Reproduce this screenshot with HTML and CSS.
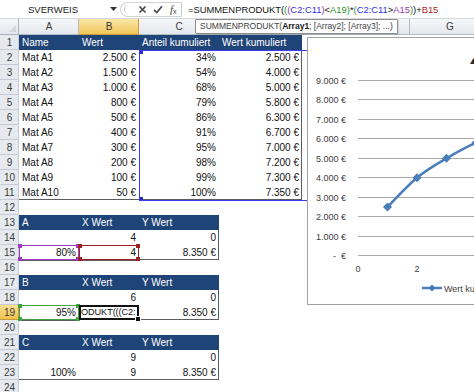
FILE: index.html
```html
<!DOCTYPE html>
<html lang="de">
<head>
<meta charset="utf-8">
<title>SUMMENPRODUKT</title>
<link rel="stylesheet" href="styles.css">
</head>
<body>
<div class="app">
  <div class="fbar">
    <div class="namebox">SVERWEIS</div>
    <div class="nbarrow"><svg width="7" height="4" viewBox="0 0 7 4"><path d="M0 0H7L3.5 4Z" fill="#333"/></svg></div>
    <div class="fxbtns">
      <span class="grip"></span>
      <svg class="ico" width="9" height="9" viewBox="0 0 9 9"><path d="M1.5 1.5L7.5 7.5M7.5 1.5L1.5 7.5" stroke="#4a4a4a" stroke-width="1.7"/></svg>
      <svg class="ico" width="10" height="9" viewBox="0 0 10 9"><path d="M1 4.8L3.8 7.6L9 1.2" stroke="#4a4a4a" stroke-width="1.7" fill="none"/></svg>
      <span class="fx"><i>f</i><span class="fxx">x</span></span>
    </div>
    <div class="formula">=SUMMENPRODUKT(<span class="pg">(</span><span class="pp">(</span><span class="rb">C2:C11</span><span class="pp">)</span>&lt;<span class="rg">A19</span><span class="pg">)</span>*<span class="pg">(</span><span class="rb">C2:C11</span>&gt;<span class="rp">A15</span><span class="pg">)</span>)+<span class="rr">B15</span></div>
  </div>

  <div class="sheet">
    <div class="corner"></div><div class="ch">A</div><div class="ch sel">B</div><div class="ch">C</div><div class="ch"></div><div class="ch"></div><div class="ch"></div><div class="ch">G</div>

    <div class="rn">1</div><div class="c hd">Name</div><div class="c hd">Wert</div><div class="c hd">Anteil kumuliert</div><div class="c hd">Wert kumuliert</div>
    <div class="rn">2</div><div class="c">Mat A1</div><div class="c r">2.500 €</div><div class="c r">34%</div><div class="c r tr">2.500 €</div>
    <div class="rn">3</div><div class="c">Mat A2</div><div class="c r">1.500 €</div><div class="c r">54%</div><div class="c r tr">4.000 €</div>
    <div class="rn">4</div><div class="c">Mat A3</div><div class="c r">1.000 €</div><div class="c r">68%</div><div class="c r tr">5.000 €</div>
    <div class="rn">5</div><div class="c">Mat A4</div><div class="c r">800 €</div><div class="c r">79%</div><div class="c r tr">5.800 €</div>
    <div class="rn">6</div><div class="c">Mat A5</div><div class="c r">500 €</div><div class="c r">86%</div><div class="c r tr">6.300 €</div>
    <div class="rn">7</div><div class="c">Mat A6</div><div class="c r">400 €</div><div class="c r">91%</div><div class="c r tr">6.700 €</div>
    <div class="rn">8</div><div class="c">Mat A7</div><div class="c r">300 €</div><div class="c r">95%</div><div class="c r tr">7.000 €</div>
    <div class="rn">9</div><div class="c">Mat A8</div><div class="c r">200 €</div><div class="c r">98%</div><div class="c r tr">7.200 €</div>
    <div class="rn">10</div><div class="c">Mat A9</div><div class="c r">100 €</div><div class="c r">99%</div><div class="c r tr">7.300 €</div>
    <div class="rn">11</div><div class="c tb">Mat A10</div><div class="c r tb">50 €</div><div class="c r tb">100%</div><div class="c r trb">7.350 €</div>
    <div class="rn">12</div>

    <div class="rn">13</div><div class="c hd">A</div><div class="c hd">X Wert</div><div class="c hd">Y Wert</div>
    <div class="rn">14</div><div class="c"></div><div class="c r">4</div><div class="c r tr">0</div>
    <div class="rn">15</div><div class="c r rf purple">80%</div><div class="c r rf red">4</div><div class="c r trb">8.350 €</div>
    <div class="rn">16</div>

    <div class="rn">17</div><div class="c hd">B</div><div class="c hd">X Wert</div><div class="c hd">Y Wert</div>
    <div class="rn">18</div><div class="c"></div><div class="c r">6</div><div class="c r tr">0</div>
    <div class="rn on">19</div><div class="c r rf green">95%</div><div class="c act"><span>ODUKT(((C2:</span></div><div class="c r trb">8.350 €</div>
    <div class="rn">20</div>

    <div class="rn">21</div><div class="c hd">C</div><div class="c hd">X Wert</div><div class="c hd">Y Wert</div>
    <div class="rn">22</div><div class="c"></div><div class="c r">9</div><div class="c r tr">0</div>
    <div class="rn">23</div><div class="c r tb">100%</div><div class="c r tb">9</div><div class="c r trb">8.350 €</div>
    <div class="rn">24</div>

    <div class="range"></div>
  </div>

  <div class="tip">SUMMENPRODUKT(<b>Array1</b>; [Array2]; [Array3]; ...)</div>

  <div class="chart">
    <svg width="180" height="267" viewBox="1 1 180 267">
      <g stroke="#a9a9a9" stroke-width="1">
        <line x1="51" y1="218.5" x2="200" y2="218.5"/>
        <line x1="51" y1="199.5" x2="200" y2="199.5"/>
        <line x1="51" y1="179.5" x2="200" y2="179.5"/>
        <line x1="51" y1="160.5" x2="200" y2="160.5"/>
        <line x1="51" y1="140.5" x2="200" y2="140.5"/>
        <line x1="51" y1="121.5" x2="200" y2="121.5"/>
        <line x1="51" y1="101.5" x2="200" y2="101.5"/>
        <line x1="51" y1="82.5" x2="200" y2="82.5"/>
        <line x1="51" y1="62.5" x2="200" y2="62.5"/>
        <line x1="51" y1="43.5" x2="200" y2="43.5"/>
      </g>
      <g class="lbl" text-anchor="end">
        <text x="39" y="46.5">9.000 €</text>
        <text x="39" y="66">8.000 €</text>
        <text x="39" y="85.5">7.000 €</text>
        <text x="39" y="105">6.000 €</text>
        <text x="39" y="124.5">5.000 €</text>
        <text x="39" y="144">4.000 €</text>
        <text x="39" y="163.5">3.000 €</text>
        <text x="39" y="183">2.000 €</text>
        <text x="39" y="202.5">1.000 €</text>
        <text x="39" y="222">€</text>
        <text x="29" y="222">-</text>
      </g>
      <g class="lbl" text-anchor="middle">
        <text x="51" y="235">0</text>
        <text x="110" y="235">2</text>
      </g>
      <path d="M80.5,169.9 C85.4,165 100.2,148.8 110,140.7 C119.8,132.6 129.7,127.1 139.5,121.3 C149.3,115.5 159.2,109.9 169,105.7 C178.8,101.5 188.7,98.7 198.5,96" fill="none" stroke="#4a7ebb" stroke-width="2.5"/>
      <g fill="#4a7ebb">
        <polygon points="80.5,165.4 85,169.9 80.5,174.4 76,169.9"/>
        <polygon points="110,136.2 114.5,140.7 110,145.2 105.5,140.7"/>
        <polygon points="139.5,116.8 144,121.3 139.5,125.8 135,121.3"/>
        <polygon points="169,101.2 173.5,105.7 169,110.2 164.5,105.7"/>
      </g>
      <line x1="115" y1="251" x2="135" y2="251" stroke="#4a7ebb" stroke-width="2.5"/>
      <polygon points="125,247.5 128.5,251 125,254.5 121.5,251" fill="#4a7ebb"/>
      <text class="lbl" x="137" y="254.5">Wert kumuliert</text>
      <polygon points="163,27 166.5,21 170,27" fill="#3a2a1c"/>
    </svg>
  </div>
</div>
</body>
</html>
```

FILE: styles.css
```css
html, body {
  margin: 0;
  padding: 0;
  background: #fff;
}
body {
  width: 474px;
  height: 392px;
  overflow: hidden;
  font-family: "Liberation Sans", Arial, sans-serif;
  color: #111;
}
.app {
  position: relative;
  width: 474px;
  height: 392px;
  overflow: hidden;
}

/* formula bar */
.fbar {
  display: flex;
  align-items: center;
  height: 18px;
  border-bottom: 1px solid #d3d8de;
  background: #fff;
  white-space: nowrap;
}
.namebox {
  width: 106px;
  text-align: center;
  font-size: 9.5px;
  color: #222;
}
.nbarrow {
  width: 14px;
  display: flex;
  justify-content: center;
  align-items: center;
}
.fxbtns {
  width: 62px;
  height: 15px;
  box-sizing: border-box;
  display: flex;
  align-items: center;
  border: 1px solid #cfd4da;
  border-right: 1px solid #c6cbd1;
  border-radius: 8px 0 0 8px;
}
.grip {
  width: 6px;
  height: 9px;
  margin: 0 7px 0 3px;
  border-left: 1px solid #c3c8ce;
  border-radius: 5px 0 0 5px;
}
.ico {
  display: block;
  margin-right: 6px;
}
.fx {
  font-family: "Liberation Serif", serif;
  font-size: 11px;
  color: #444;
  margin-left: 1px;
}
.fxx {
  font-family: "Liberation Sans", sans-serif;
  font-size: 7px;
  position: relative;
  top: 1px;
}
.formula {
  padding-left: 6px;
  font-size: 9.4px;
  color: #111;
}
.rb { color: #3030e8; }
.rg { color: #2a962a; }
.rp { color: #9434b4; }
.rr { color: #b02020; }
.pg { color: #2a962a; }
.pp { color: #9434b4; }

/* sheet grid */
.sheet {
  position: relative;
  display: grid;
  grid-template-columns: 19px 60px 60px 80px 83px 50px 58px 80px;
  grid-template-rows: 16px;
  grid-auto-rows: 15px;
  font-size: 10px;
}
.corner {
  background: linear-gradient(#f4f6f8, #e2e6eb);
  box-shadow: inset -1px -1px #a9b3bf;
  position: relative;
}
.corner::after {
  content: "";
  position: absolute;
  right: 3px;
  bottom: 3px;
  border-left: 7px solid transparent;
  border-bottom: 7px solid #d3d8de;
}
.ch {
  background: linear-gradient(#f6f7f9, #e3e7ec);
  box-shadow: inset -1px -1px #b3bcc7;
  text-align: center;
  line-height: 16px;
  color: #3a3a3a;
}
.ch.sel {
  background: linear-gradient(#fae8a8, #f2c453);
  box-shadow: inset -1px -1px #c99c3a;
  color: #333;
}
.rn {
  grid-column: 1;
  background: #e6eaef;
  box-shadow: inset -1px -1px #c5ccd5;
  text-align: center;
  line-height: 15px;
  color: #3a3a3a;
}
.rn.on {
  background: linear-gradient(#f9e08f, #f1c04b);
  box-shadow: inset -1px -1px #c99c3a;
}
.c {
  line-height: 15px;
  padding: 0 3px;
  white-space: nowrap;
  overflow: hidden;
  color: #111;
}
.r { text-align: right; }
.hd {
  background: #1f4478;
  color: #fff;
}
.tr { box-shadow: inset -1px 0 #5c5c5c; }
.tb { box-shadow: inset 0 -1px #5c5c5c; }
.trb { box-shadow: inset -1px -1px #5c5c5c; }

/* range finder highlights */
.rf {
  position: relative;
  overflow: visible;
  z-index: 2;
  box-shadow: inset 0 0 0 1px var(--c), 0 1px #5c5c5c;
}
.rf::after {
  content: "";
  position: absolute;
  inset: -1px;
  background:
    linear-gradient(var(--c), var(--c)) 0 0 / 4px 4px no-repeat,
    linear-gradient(var(--c), var(--c)) 100% 0 / 4px 4px no-repeat,
    linear-gradient(var(--c), var(--c)) 0 100% / 4px 4px no-repeat,
    linear-gradient(var(--c), var(--c)) 100% 100% / 4px 4px no-repeat;
}
.purple { --c: #a03cc4; }
.red { --c: #9c2024; }
.green { --c: #3fa23f; }

.act {
  position: relative;
  z-index: 3;
  overflow: visible;
  padding: 0 1px 0 2px;
  box-shadow: inset 0 0 0 2px #111;
}
.act span {
  display: block;
  overflow: hidden;
  white-space: nowrap;
  font-size: 9.2px;
  letter-spacing: -0.1px;
}
.act::after {
  content: "";
  position: absolute;
  right: -2px;
  bottom: -2px;
  width: 4px;
  height: 4px;
  background: #111;
  border: 1px solid #fff;
}

.range {
  position: absolute;
  grid-column: 4;
  grid-row: 3 / 13;
  top: 0;
  left: 0;
  right: -1px;
  bottom: -1px;
  border: 1px solid #3a3af0;
  pointer-events: none;
  background:
    linear-gradient(#2828c8, #2828c8) 0 0 / 3px 3px no-repeat,
    linear-gradient(#2828c8, #2828c8) 100% 0 / 3px 3px no-repeat,
    linear-gradient(#2828c8, #2828c8) 0 100% / 3px 3px no-repeat,
    linear-gradient(#2828c8, #2828c8) 100% 100% / 3px 3px no-repeat;
}

/* function tooltip */
.tip {
  position: absolute;
  left: 195px;
  top: 19px;
  height: 15px;
  box-sizing: border-box;
  padding: 0 4px;
  border: 1px solid #8e8e8e;
  border-radius: 1px;
  background: #fcfcfc;
  box-shadow: 1px 1px 1px rgba(0, 0, 0, 0.12);
  font-size: 8.5px;
  line-height: 13px;
  color: #444;
  white-space: nowrap;
}
.tip b { color: #222; }

/* floating chart */
.chart {
  position: absolute;
  left: 307px;
  top: 37px;
  width: 180px;
  height: 268px;
  box-sizing: border-box;
  border: 1px solid #a2a2a2;
  background: #fff;
}
.chart svg { display: block; }
.lbl {
  font-family: "Liberation Sans", Arial, sans-serif;
  font-size: 9px;
  fill: #404040;
}
```
